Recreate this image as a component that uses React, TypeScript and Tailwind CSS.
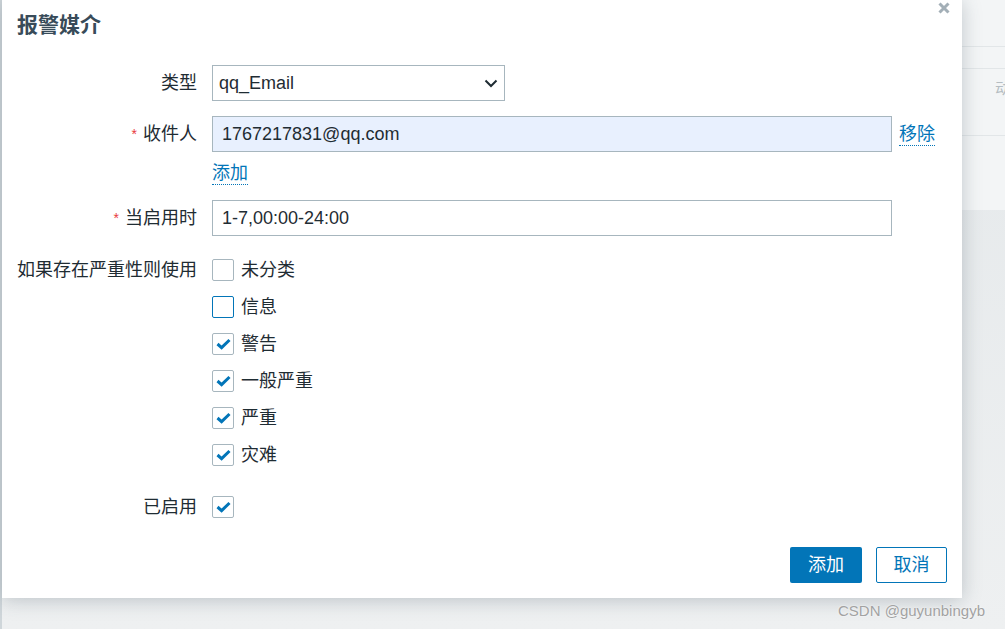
import React from 'react';

const font = { fontFamily: '"Liberation Sans", "Noto Sans CJK SC", sans-serif' };

function Check({ checked, focused }: { checked?: boolean; focused?: boolean }) {
  return (
    <span
      className={`flex h-[22px] w-[22px] items-center justify-center rounded-[2px] border bg-white ${
        focused ? 'border-[#0275b8]' : 'border-[#a7b6be]'
      }`}
    >
      {checked && (
        <svg width="15" height="12" viewBox="0 0 15 12">
          <path d="M1.5 6 L5.6 9.6 L13.5 2" fill="none" stroke="#0275b8" strokeWidth="3" />
        </svg>
      )}
    </span>
  );
}

function Row({ label, required, children, className = '' }: { label: string; required?: boolean; children: React.ReactNode; className?: string }) {
  return (
    <div className={`flex items-start ${className}`}>
      <div className="flex w-[210px] shrink-0 justify-end pr-[15px]">
        <div className="flex min-h-[36px] items-center">
          {required && <span className="mr-[6px] text-[14px] text-[#e8393d]">*</span>}
          <span>{label}</span>
        </div>
      </div>
      <div className="flex-1">{children}</div>
    </div>
  );
}

const severities = [
  { name: '未分类', checked: false },
  { name: '信息', checked: false, focused: true },
  { name: '警告', checked: true },
  { name: '一般严重', checked: true },
  { name: '严重', checked: true },
  { name: '灾难', checked: true },
];

export default function App() {
  return (
    <div className="relative h-[629px] w-[1005px] overflow-hidden bg-gradient-to-b from-[#e4e8ea] to-[#eef0f1] text-[18px] text-[#1f2c33]" style={font}>
      {/* page behind the overlay */}
      <div className="absolute left-0 top-0 h-full w-[2px] bg-[#cfd6da]" />
      <div className="absolute right-0 top-0 h-[210px] w-[43px] bg-[#f3f5f6]">
        <div className="h-[47px] border-b border-[#e2e6e8]" />
        <div className="h-[22px] border-b border-[#e2e6e8]" />
        <div className="h-[67px] overflow-hidden border-b border-[#e2e6e8] pl-[33px] pt-[10px] text-[16px] leading-[20px] text-[#b5bdc2]">
          <span className="block w-[10px] overflow-hidden whitespace-nowrap">动</span>
        </div>
      </div>

      {/* dialog */}
      <div className="absolute left-[2px] top-0 flex h-[598px] w-[960px] flex-col bg-white shadow-[0_2px_18px_rgba(60,80,95,0.28)]">
        <div className="relative flex h-[50px] items-center pl-[15px] text-[21px] font-bold text-[#384b59]">
          报警媒介
          <svg className="absolute right-[12px] top-[2px]" width="12" height="12" viewBox="0 0 12 12">
            <path d="M1.5 1.5 L10.5 10.5 M10.5 1.5 L1.5 10.5" stroke="#a3afb7" strokeWidth="3" />
          </svg>
        </div>

        <Row label="类型" className="mt-[15px]">
          <div className="flex h-[36px] w-[293px] items-center justify-between border border-[#a7b6be] pl-[6px] pr-[6px]">
            <span>qq_Email</span>
            <svg width="14" height="9" viewBox="0 0 14 9">
              <path d="M1.5 1.5 L7 7 L12.5 1.5" fill="none" stroke="#1f2c33" strokeWidth="2" />
            </svg>
          </div>
        </Row>

        <Row label="收件人" required className="mt-[15px]">
          <div className="flex items-center">
            <div className="flex h-[36px] w-[680px] items-center border border-[#a7b6be] bg-[#e8f0fe] pl-[9px]">1767217831@qq.com</div>
            <span className="ml-[7px] border-b border-dotted border-[#0275b8] leading-[22px] text-[#0275b8]">移除</span>
          </div>
          <div className="mt-[10px] flex">
            <span className="border-b border-dotted border-[#0275b8] leading-[22px] text-[#0275b8]">添加</span>
          </div>
        </Row>

        <Row label="当启用时" required className="mt-[15px]">
          <div className="flex h-[36px] w-[680px] items-center border border-[#a7b6be] pl-[9px]">1-7,00:00-24:00</div>
        </Row>

        <div className="mt-[23px] flex items-start">
          <div className="w-[210px] shrink-0 whitespace-nowrap pl-[15px] leading-[22px]">如果存在严重性则使用</div>
          <div className="flex flex-col gap-[15px]">
            {severities.map((s) => (
              <div key={s.name} className="flex h-[22px] items-center gap-[7px]">
                <Check checked={s.checked} focused={s.focused} />
                <span>{s.name}</span>
              </div>
            ))}
          </div>
        </div>

        <div className="mt-[30px] flex items-center">
          <div className="w-[210px] shrink-0 pr-[15px] text-right leading-[22px]">已启用</div>
          <Check checked />
        </div>

        <div className="mt-[29px] flex justify-end gap-[14px] pr-[15px]">
          <button className="h-[36px] w-[72px] rounded-[2px] bg-[#0275b8] text-white">添加</button>
          <button className="h-[36px] w-[71px] rounded-[2px] border border-[#0275b8] bg-white text-[#0275b8]">取消</button>
        </div>
      </div>

      <div className="absolute left-[838px] top-[600px] text-[15px] text-[#a2a2a2] [text-shadow:0_0_2px_#fff]">CSDN @guyunbingyb</div>
    </div>
  );
}
